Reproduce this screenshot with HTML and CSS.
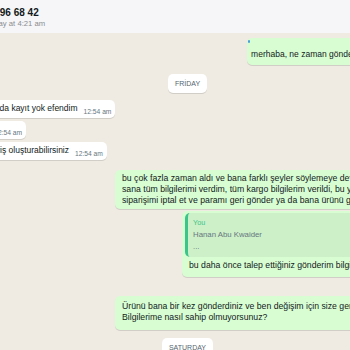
FILE: index.html
```html
<!DOCTYPE html>
<html lang="tr">
<head>
    <meta charset="UTF-8">
    <meta name="viewport" content="width=device-width, initial-scale=1.0">
    <title>Chat</title>
    <link rel="stylesheet" href="styles.css">
</head>
<body>
    <div class="app">
        <!-- Contact header -->
        <header class="chat-header">
            <div class="contact-name">+90 532 296 68 42</div>
            <div class="contact-status">last seen today at 4:21 am</div>
        </header>

        <!-- Messages -->
        <main class="chat">
            <div class="msg out tagged">
                merhaba, ne zaman gönderilir?<span class="meta">11:02 pm <svg class="ticks" width="11" height="7" viewBox="0 0 16 10"><path d="M1 5.5l2.5 2.5L9 2M6 8l1 1 6-7" fill="none" stroke="#53bdeb" stroke-width="1.6"/></svg></span>
            </div>

            <div class="day"><span>Friday</span></div>

            <div class="msg in">Bu numarada kayıt yok efendim<span class="meta">12:54 am</span></div>
            <div class="msg in">Tamam.<span class="meta">12:54 am</span></div>
            <div class="msg in">Şimdi sipariş oluşturabilirsiniz<span class="meta">12:54 am</span></div>

            <div class="msg out long">
                bu çok fazla zaman aldı ve bana farklı şeyler söylemeye devam ettiniz, hiçbir şey olmadı<br>
                sana tüm bilgilerimi verdim, tüm kargo bilgilerim verildi, bu yüzden lütfen artık<br>
                siparişimi iptal et ve paramı geri gönder ya da bana ürünü gönderin, teşekkürler<span class="meta">12:58 am</span>
            </div>

            <div class="msg out reply">
                <div class="quote">
                    <div class="quote-author">You</div>
                    <div class="quote-line">Hanan Abu Kwaider</div>
                    <div class="quote-line">...</div>
                </div>
                <div class="reply-text">bu daha önce talep ettiğiniz gönderim bilgileriniz değil mi??</div>
                <div class="meta-row"><span class="meta">1:02 am</span></div>
            </div>

            <div class="msg out long spaced">
                Ürünü bana bir kez gönderdiniz ve ben değişim için size geri gönderdim, tekrar<br>
                Bilgilerime nasıl sahip olmuyorsunuz?
                <div class="meta-row"><span class="meta">1:05 am</span></div>
            </div>

            <div class="day"><span>Saturday</span></div>
        </main>
    </div>
</body>
</html>
```

FILE: styles.css
```css
body {
    margin: 0;
    overflow: hidden;
    font-family: "Liberation Sans", Arial, sans-serif;
    background-color: #efeae2;
    color: #111b21;
}

.app {
    width: 496px;
    margin-left: -60px;
}

/* header */
.chat-header {
    height: 33px;
    box-sizing: border-box;
    padding: 7px 0 0 15px;
    background: #f6f6f8;
}

.contact-name {
    font-size: 10px;
    font-weight: bold;
    line-height: 12px;
    white-space: nowrap;
}

.contact-status {
    font-size: 7.7px;
    line-height: 10px;
    color: #8a8d91;
    white-space: nowrap;
}

/* messages */
.chat {
    padding: 5px 13px 0 12px;
}

.msg {
    position: relative;
    width: fit-content;
    margin-top: 3px;
    padding: 3px 4px 4px 6px;
    font-size: 8.5px;
    line-height: 11px;
    white-space: nowrap;
    border-radius: 5px;
    box-shadow: 0 1px 0.5px rgba(11, 20, 26, 0.13);
}

.msg.in {
    background: #fff;
}

.msg.out {
    margin-left: auto;
    background: #d9fdd3;
    overflow: hidden;
}

.msg.tagged {
    margin-top: 0;
    padding: 11px 6px 4px 4px;
}

.msg.tagged::before {
    content: "";
    position: absolute;
    left: 1px;
    top: 2px;
    width: 2px;
    height: 3px;
    border-radius: 1px;
    background: #4a9fd8;
}

.msg.long {
    max-width: 295px;
    margin-top: 10px;
    padding: 3px 6px 3px 7px;
    font-size: 8.7px;
}

.msg.long.spaced {
    margin-top: 19px;
    padding: 5px 6px 2px 7px;
}

.meta {
    margin-left: 6px;
    font-size: 6.7px;
    line-height: 0;
    color: #667781;
    vertical-align: -3px;
}

.ticks {
    margin-left: 2px;
    vertical-align: -1px;
}

.meta-row {
    height: 5px;
    line-height: 5px;
    text-align: right;
}

/* reply bubble */
.msg.reply {
    margin-top: 2px;
    padding: 2px 3px 1px;
}

.quote {
    padding: 4px 6px 4px 5px;
    border-left: 3px solid #3cc48a;
    border-radius: 5px;
    background: rgba(0, 0, 0, 0.05);
}

.quote-author {
    font-size: 7.2px;
    line-height: 12px;
    color: #3cc48a;
}

.quote-line {
    font-size: 7.8px;
    line-height: 12px;
    color: #667781;
}

.reply-text {
    padding: 3px 4px 0;
    font-size: 8.7px;
}

/* day separators */
.day {
    margin: 7px 0;
    text-align: center;
}

.day + .msg {
    margin-top: 7px;
}

.day span {
    display: inline-block;
    padding: 0 7px;
    font-size: 7px;
    line-height: 19px;
    text-transform: uppercase;
    color: #54656f;
    background: #fff;
    border-radius: 5px;
    box-shadow: 0 1px 0.5px rgba(11, 20, 26, 0.13);
}

.msg.spaced + .day {
    margin-top: 6px;
}
```
